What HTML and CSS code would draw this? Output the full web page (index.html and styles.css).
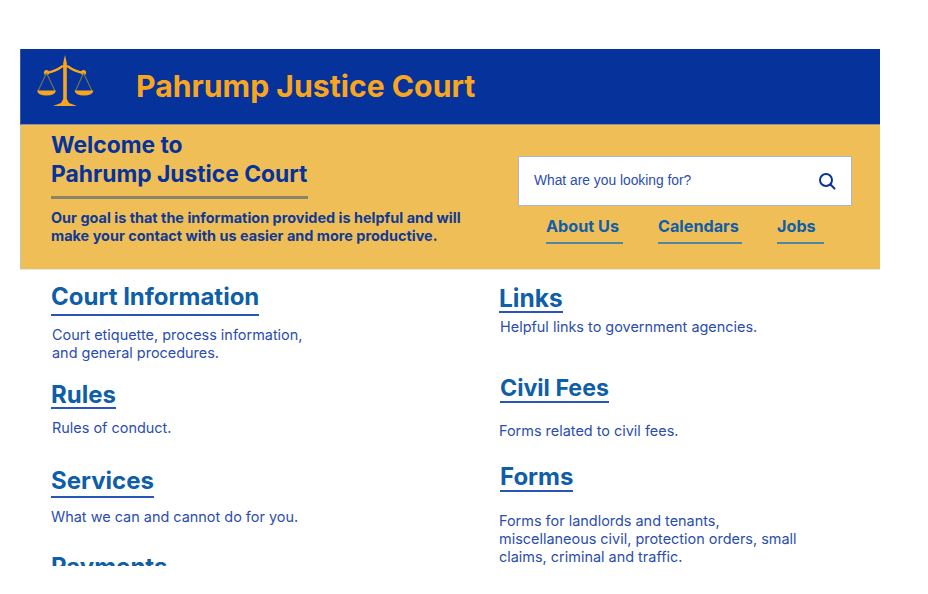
FILE: index.html
```html
<!DOCTYPE html>
<html lang="en">
<head>
  <meta charset="UTF-8" />
  <title>Pahrump Justice Court</title>
  <link rel="stylesheet" href="styles.css">
</head>
<body>
  <div class="page">
    <header class="banner">
      <svg class="scales" width="60" height="54" viewBox="0 0 60 54" fill="none">
        <path d="M29 0 L30.800 8 L30.800 44 L33 48 L41 51 L17 51 L25 48 L27.200 44 L27.200 8 Z" fill="#f9a61e"/>
        <path d="M10.500 18 Q20 16 26 11.500 Q29 10 32 11.500 Q38 16 47.500 18" stroke="#f9a61e" stroke-width="2.200"/>
        <circle cx="10.500" cy="17.500" r="2.600" fill="#f9a61e"/>
        <circle cx="47.500" cy="17.500" r="2.600" fill="#f9a61e"/>
        <path d="M10.500 18 L2 36 M10.500 18 L19 36 M47.500 18 L39.500 36 M47.500 18 L56 36" stroke="#77764f" stroke-width="1.100"/>
        <path d="M1 35.500 L20 35.500 Q19 40.500 10.500 40.500 Q2 40.500 1 35.500 Z" fill="#f9a61e"/>
        <path d="M38.500 35.500 L57.500 35.500 Q56.500 40.500 48 40.500 Q39.500 40.500 38.500 35.500 Z" fill="#f9a61e"/>
      </svg>
      <div class="banner-title">Pahrump Justice Court</div>
    </header>

    <section class="welcome">
      <div class="welcome-text">
        <h1>Welcome to<br>Pahrump Justice Court</h1>
        <p>Our goal is that the information provided is helpful and will make your contact with us easier and more productive.</p>
      </div>
      <div class="welcome-side">
        <div class="search">
          <span>What are you looking for?</span>
          <svg width="18" height="18" viewBox="0 0 18 18" fill="none" stroke="#06329b" stroke-width="2">
            <circle cx="8" cy="8" r="6"/>
            <path d="M12.500 12.500 L16.500 16.500" stroke-linecap="round"/>
          </svg>
        </div>
        <nav class="quick-links">
          <a class="about">About Us</a>
          <a class="calendars">Calendars</a>
          <a class="jobs">Jobs</a>
        </nav>
      </div>
    </section>

    <main class="columns">
      <div class="col">
        <div class="item court">
          <h2>Court Information</h2>
          <p>Court etiquette, process information,<br>and general procedures.</p>
        </div>
        <div class="item rules">
          <h2>Rules</h2>
          <p>Rules of conduct.</p>
        </div>
        <div class="item services">
          <h2>Services</h2>
          <p>What we can and cannot do for you.</p>
        </div>
        <div class="item payments">
          <h2>Payments</h2>
        </div>
      </div>
      <div class="col">
        <div class="item links">
          <h2>Links</h2>
          <p>Helpful links to government agencies.</p>
        </div>
        <div class="item fees">
          <h2>Civil Fees</h2>
          <p>Forms related to civil fees.</p>
        </div>
        <div class="item forms">
          <h2>Forms</h2>
          <p>Forms for landlords and tenants,<br>miscellaneous civil, protection orders, small<br>claims, criminal and traffic.</p>
        </div>
      </div>
    </main>
  </div>
</body>
</html>
```

FILE: styles.css
```css
body {
  margin: 0;
  background: #fff;
  font-family: Inter, "Liberation Sans", sans-serif;
}
.page {
  width: 860px;
  height: 517px;
  margin: 49px 0 0 20px;
  overflow: hidden;
}

/* top banner */
.banner {
  display: flex;
  align-items: center;
  height: 76px;
  padding-left: 15px;
  background: #06329b;
  border-left: 1px solid #3d5c9f;
  border-bottom: 1px solid #8f94a0;
  box-sizing: border-box;
}
.scales {
  flex: none;
  margin-top: -10px;
}
.banner-title {
  margin: -2px 0 0 40px;
  color: #f9a61e;
  font-size: 30.200px;
  font-weight: 700;
}

/* yellow welcome block */
.welcome {
  display: flex;
  justify-content: space-between;
  height: 145px;
  padding: 6px 28px 0 30px;
  box-sizing: border-box;
  background: #f0be57;
  border-left: 1px solid #c9c5b8;
  border-bottom: 1px solid #e6e6e6;
}
.welcome-text {
  width: 420px;
}
.welcome h1 {
  width: 257px;
  margin: 0;
  padding-bottom: 8px;
  border-bottom: 3px solid #8a8468;
  color: #06329b;
  font-size: 22.800px;
  font-weight: 700;
  line-height: 28.500px;
  white-space: nowrap;
}
.welcome p {
  margin: 10px 0 0;
  color: #0f3a94;
  font-size: 14.450px;
  font-weight: 700;
  line-height: 18px;
}
.welcome-side {
  width: 334px;
  padding-top: 25px;
}
.search {
  display: flex;
  align-items: center;
  justify-content: space-between;
  height: 50px;
  padding: 0 15px 1px;
  box-sizing: border-box;
  background: #fff;
  border: 1px solid #a9b4d8;
  color: #2a4db0;
  font-family: "Liberation Sans", Arial, sans-serif;
  font-size: 13.800px;
}
.quick-links {
  display: flex;
  margin: 10px 0 0 28px;
}
.quick-links a {
  padding-bottom: 6px;
  border-bottom: 2px solid #4f86a0;
  color: #0f5ea8;
  font-size: 16.200px;
  font-weight: 700;
}
.about { width: 77px; margin-right: 35px; }
.calendars { width: 84px; margin-right: 35px; }
.jobs { width: 47px; }

/* two lists of links */
.columns {
  display: grid;
  grid-template-columns: 448px 1fr;
  padding-left: 31px;
}
.item h2 {
  display: inline-block;
  margin: 0;
  border-bottom: 2px solid #2a55b8;
  color: #0f5ea8;
  font-size: 24px;
  font-weight: 700;
  line-height: 26px;
}
.item p {
  margin: 0;
  color: #2a4db0;
  font-size: 14.450px;
  line-height: 18px;
}
.court { margin-top: 14px; }
.court h2 { padding-bottom: 4px; }
.court p { margin: 10px 0 0 1px; }
.rules { margin-top: 20px; }
.rules h2 { line-height: 25px; }
.rules p { margin: 10px 0 0 1px; }
.services { margin-top: 31px; }
.services h2 { padding-bottom: 2px; }
.services p { margin: 10px 0 0; }
.payments { margin-top: 28px; }
.links { margin-top: 16px; }
.links h2 { font-size: 24.500px; line-height: 25px; }
.links p { margin: 5px 0 0 1px; }
.fees { margin-top: 39px; }
.fees h2 { margin-left: 1px; font-size: 23.200px; }
.fees p { margin: 19px 0 0; }
.forms { margin-top: 24px; }
.forms h2 { margin-left: 1px; }
.forms p { margin: 20px 0 0; }
```
